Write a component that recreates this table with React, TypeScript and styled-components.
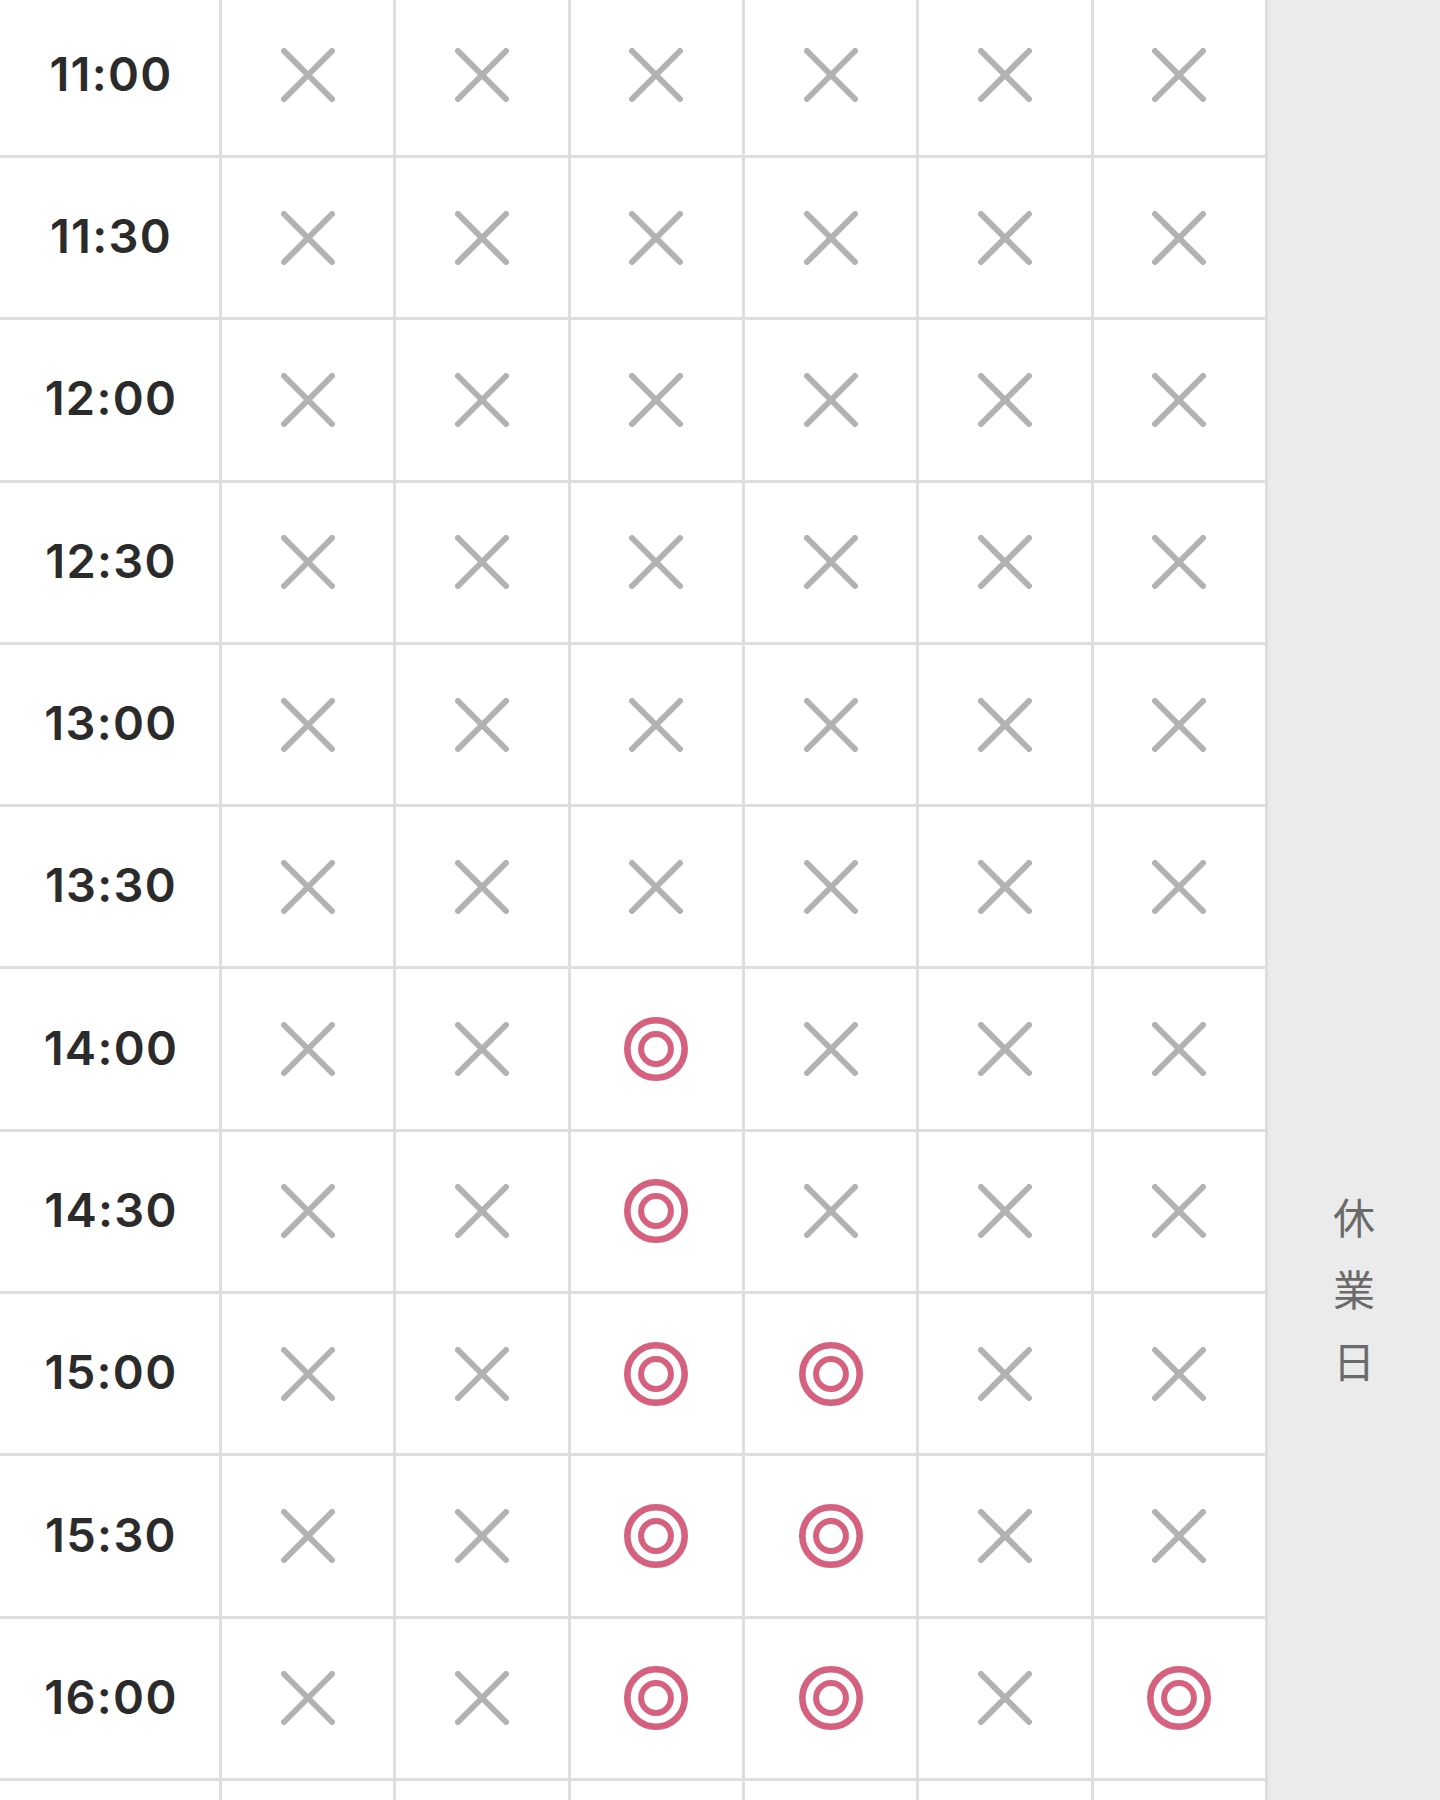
import React from "react";
import styled, { createGlobalStyle } from "styled-components";

const GlobalStyle = createGlobalStyle`
  html, body {
    margin: 0;
    padding: 0;
    background: #ffffff;
  }
  #root {
    height: 1800px;
    overflow: hidden;
  }
`;

const Page = styled.div`
  display: flex;
  width: 1440px;
  height: 1800px;
  overflow: hidden;
`;

const Table = styled.div`
  width: 1268px;
  flex: none;
  margin-top: -4.3px;
  display: flex;
  flex-direction: column;
`;

const Row = styled.div`
  display: grid;
  grid-template-columns: 219px repeat(6, 1fr);
  height: 162.3px;
  flex: none;
  box-sizing: border-box;
  border-bottom: 3px solid #dedede;
  border-right: 3px solid #dedede;
`;

const TimeCell = styled.div`
  display: flex;
  align-items: center;
  justify-content: center;
  padding: 0 0 4px 3px;
  font-family: Inter, "Noto Sans", sans-serif;
  font-weight: 600;
  font-size: 47px;
  color: #2b2b2b;
  letter-spacing: 1.3px;
`;

const SlotCell = styled.div`
  display: flex;
  align-items: center;
  justify-content: center;
  border-left: 3px solid #dedede;
`;

const Side = styled.div`
  flex: 1;
  background: #ebebeb;
  display: flex;
  flex-direction: column;
  align-items: center;
  padding-top: 1180px;
  font-family: "Noto Sans CJK JP", "Noto Sans", sans-serif;
  font-size: 42px;
  line-height: 72px;
  color: #6a6a6a;
`;

const Cross = () => (
  <svg width="54" height="54" viewBox="0 0 54 54">
    <g stroke="#b2b2b2" strokeWidth="6" strokeLinecap="round">
      <line x1="3" y1="3" x2="51" y2="51" />
      <line x1="51" y1="3" x2="3" y2="51" />
    </g>
  </svg>
);

const Double = () => (
  <svg width="66" height="66" viewBox="0 0 66 66">
    <g stroke="#d6617f" fill="none">
      <circle cx="33" cy="33" r="28.7" strokeWidth="6.6" />
      <circle cx="33" cy="33" r="14.9" strokeWidth="6" />
    </g>
  </svg>
);

// o = available, x = full; the last row only peeks in at the bottom edge
const rows: [string, string][] = [
  ["11:00", "xxxxxx"],
  ["11:30", "xxxxxx"],
  ["12:00", "xxxxxx"],
  ["12:30", "xxxxxx"],
  ["13:00", "xxxxxx"],
  ["13:30", "xxxxxx"],
  ["14:00", "xxoxxx"],
  ["14:30", "xxoxxx"],
  ["15:00", "xxooxx"],
  ["15:30", "xxooxx"],
  ["16:00", "xxooxo"],
  ["", "xxooxo"],
];

export default function App() {
  return (
    <>
      <GlobalStyle />
      <Page>
        <Table>
          {rows.map(([time, marks], r) => (
            <Row key={r}>
              <TimeCell>{time}</TimeCell>
              {marks.split("").map((m, i) => (
                <SlotCell key={i}>{m === "o" ? <Double /> : <Cross />}</SlotCell>
              ))}
            </Row>
          ))}
        </Table>
        <Side>
          <span>休</span>
          <span>業</span>
          <span>日</span>
        </Side>
      </Page>
    </>
  );
}
